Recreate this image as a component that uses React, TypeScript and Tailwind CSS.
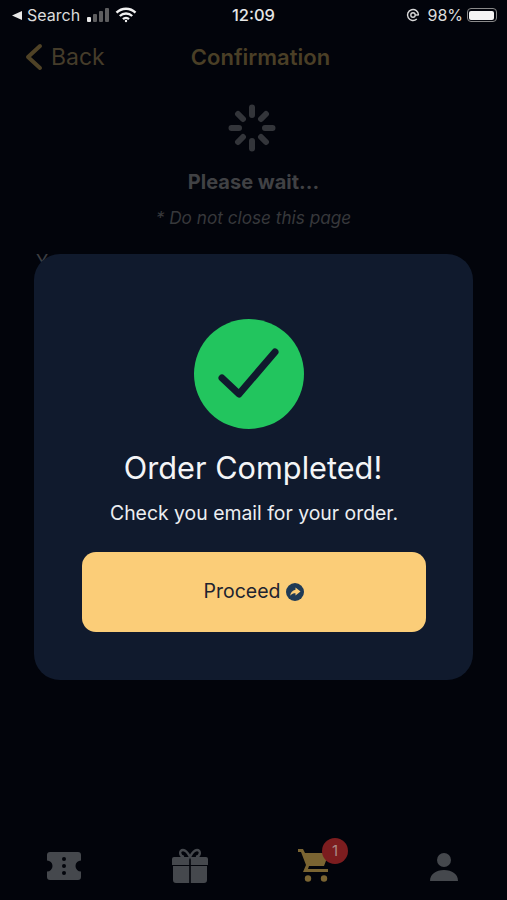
import React from 'react';

const FONT = "font-['Inter','Noto_Sans',sans-serif]";

const Spinner: React.FC = () => (
  <svg width="48" height="48" viewBox="0 0 48 48" fill="none" stroke="#33353a" strokeWidth="6" strokeLinecap="round">
    <path d="M24 3.500V11M24 37v7.500M3.500 24H11M37 24h7.500M10 10l5 5M33 33l5 5M38 10l-5 5M15 33l-5 5" />
  </svg>
);

const StatusBar: React.FC = () => (
  <div className="flex items-center justify-between h-[30px] pl-[11px] pr-[10px] text-[#dcdcdc] text-[16px] leading-none">
    <div className="flex items-center w-[150px]">
      <svg width="11" height="11" viewBox="0 0 11 11" className="mr-[5px]">
        <path d="M11 1v9L1 5.500z" fill="#e8e8e8" />
      </svg>
      <span>Search</span>
      <svg width="24" height="16" viewBox="0 0 24 16" className="ml-[6px]">
        <rect x="1" y="10" width="4" height="5" rx="1" fill="#e8e8e8" />
        <rect x="7" y="7" width="4" height="8" rx="1" fill="#5d5d5f" />
        <rect x="13" y="4" width="4" height="11" rx="1" fill="#5d5d5f" />
        <rect x="19" y="1" width="4" height="14" rx="1" fill="#5d5d5f" />
      </svg>
      <svg width="22" height="16" viewBox="0 0 22 16" className="ml-[5px]" fill="none" stroke="#f2f2f2" strokeWidth="2.400">
        <path d="M1.500 5.600a13.500 13.500 0 0 1 19 0M4.800 9a9 9 0 0 1 12.400 0M8 12.100a4.400 4.400 0 0 1 6 0" />
        <circle cx="11" cy="14" r="1.200" fill="#f2f2f2" stroke="none" />
      </svg>
    </div>
    <span className="font-medium text-[#e6e6e6] text-[16.500px] -ml-[1px]">12:09</span>
    <div className="flex items-center justify-end w-[150px]">
      <svg width="14" height="14" viewBox="0 0 14 14" fill="none" stroke="#d8d8d8" strokeWidth="1.400" className="mr-[7px]">
        <path d="M12.500 7a5.500 5.500 0 1 0-1.700 4" />
        <circle cx="7" cy="7" r="2.200" />
        <path d="M9.200 7h3.600" />
      </svg>
      <span>98%</span>
      <div className="ml-[4px] w-[30px] h-[14px] rounded-[4px] border border-[#8a8a8a] p-[1.500px]">
        <div className="w-full h-full rounded-[2px] bg-[#f4f4f4]" />
      </div>
    </div>
  </div>
);

const BottomNav: React.FC = () => (
  <div className="absolute bottom-0 left-0 right-0 h-[70px]">
    <div className="flex items-start h-full pl-[46px] pt-[18px]">
      {/* ticket */}
      <svg width="36" height="30" viewBox="0 0 36 30" className="mt-[3px]">
        <path
          fillRule="evenodd"
          fill="#45484d"
          d="M4 1h28a3 3 0 0 1 3 3v5.500a5.500 5.500 0 0 0 0 11V26a3 3 0 0 1-3 3H4a3 3 0 0 1-3-3v-5.500a5.500 5.500 0 0 0 0-11V4a3 3 0 0 1 3-3zM18 6a2 2 0 1 0 0 4 2 2 0 0 0 0-4zm0 7a2 2 0 1 0 0 4 2 2 0 0 0 0-4zm0 7a2 2 0 1 0 0 4 2 2 0 0 0 0-4z"
        />
      </svg>
      {/* gift */}
      <svg width="38" height="36" viewBox="0 0 38 36" fill="#45484d" className="ml-[89px]">
        <path d="M13 9c-5-1-5-7-1-7 3 0 5 3 7 7 2-4 4-7 7-7 4 0 4 6-1 7" fill="none" stroke="#45484d" strokeWidth="2.400" />
        <path d="M3 9h15.200v8H1v-6a2 2 0 0 1 2-2zM19.800 9H35a2 2 0 0 1 2 2v6H19.800zM2 18h16.200v17H5a3 3 0 0 1-3-3zM19.800 18H36v14a3 3 0 0 1-3 3H19.800z" />
      </svg>
      {/* cart with badge */}
      <div className="relative w-[36px] h-[36px] -mt-[1px] ml-[88px]">
        <svg width="34" height="36" viewBox="0 0 34 36" fill="#7a6432">
          <path d="M1 2h5l2 4h24l-5 13H12l-1 3h20v3H6l3-7L4 5H1z" />
          <circle cx="11" cy="31.500" r="3.200" />
          <circle cx="27" cy="31.500" r="3.200" />
        </svg>
        <div className="absolute -top-[9px] left-[25px] flex h-[26px] w-[26px] items-center justify-center rounded-full bg-[#7c1d1f] text-[15px] text-[#a98a86]">
          1
        </div>
      </div>
      {/* person */}
      <svg width="30" height="30" viewBox="0 0 30 30" fill="#45484d" className="mt-[4px] ml-[96px]">
        <circle cx="15" cy="8" r="7" />
        <path d="M1 29c0-7 6-11 14-11s14 4 14 11z" />
      </svg>
    </div>
  </div>
);

const App: React.FC = () => {
  return (
    <div className={`${FONT} relative w-[507px] h-[900px] overflow-hidden bg-[#02040b]`}>
      <StatusBar />

      {/* page behind the overlay, already dimmed */}
      <div className="relative flex items-center justify-center h-[54px] pl-[14px]">
        <div className="absolute left-[24px] top-[13px] flex items-center">
          <svg width="20" height="28" viewBox="0 0 20 28" fill="none" stroke="#4f4226" strokeWidth="4" strokeLinecap="round" strokeLinejoin="round">
            <path d="M16 3L4 14l12 11" />
          </svg>
          <span className="ml-[7px] text-[23px] leading-none text-[#453c2a]">Back</span>
        </div>
        <span className="text-[22px] font-semibold leading-none text-[#4a3f26]">Confirmation</span>
      </div>

      <div className="flex flex-col items-center pt-[20px]">
        <div className="-ml-[3px]">
          <Spinner />
        </div>
        <p className="mt-[20px] text-[20px] font-bold leading-none text-[#404144]">Please wait...</p>
        <p className="mt-[17px] text-[17.200px] italic leading-none text-[#37383b]">* Do not close this page</p>
      </div>
      <p className="mt-[27px] pl-[36px] text-[18px] leading-none whitespace-nowrap text-[#3d3e41]">
        You should receive your order on your mobile
      </p>

      {/* success modal */}
      <div className="absolute left-[34px] top-[254px] flex h-[426px] w-[439px] flex-col items-center rounded-[26px] bg-[#101a2d] pt-[65px]">
        <div className="flex h-[110px] w-[110px] items-center justify-center rounded-full bg-[#22c55e] -ml-[10px]">
          <svg width="110" height="110" viewBox="0 0 110 110" fill="none" stroke="#101a2d" strokeWidth="7" strokeLinecap="round" strokeLinejoin="round">
            <path d="M28 59l17 16 36-42" />
          </svg>
        </div>
        <h2 className="mt-[21px] -ml-[1px] text-[30.700px] leading-[36px] text-[#f4f5f7]">Order Completed!</h2>
        <p className="mt-[15px] ml-[1px] text-[19.400px] leading-[24px] text-[#eceef1]">Check you email for your order.</p>
        <button className="mt-[27px] flex h-[80px] w-[344px] ml-[1px] items-center justify-center rounded-[14px] bg-[#fbcd78] text-[19.500px] text-[#1e2430]">
          Proceed
          <svg width="18" height="18" viewBox="0 0 18 18" className="ml-[6px]">
            <circle cx="9" cy="9" r="9" fill="#1f3a56" />
            <path d="M9.500 4.500L14.500 8.500 9.500 12.500V10.200C7.500 10.200 5.800 10.800 4.200 12.800 4.500 9.500 6.500 7.200 9.500 6.800z" fill="#fbcd78" />
          </svg>
        </button>
      </div>

      <BottomNav />
    </div>
  );
};

export default App;
